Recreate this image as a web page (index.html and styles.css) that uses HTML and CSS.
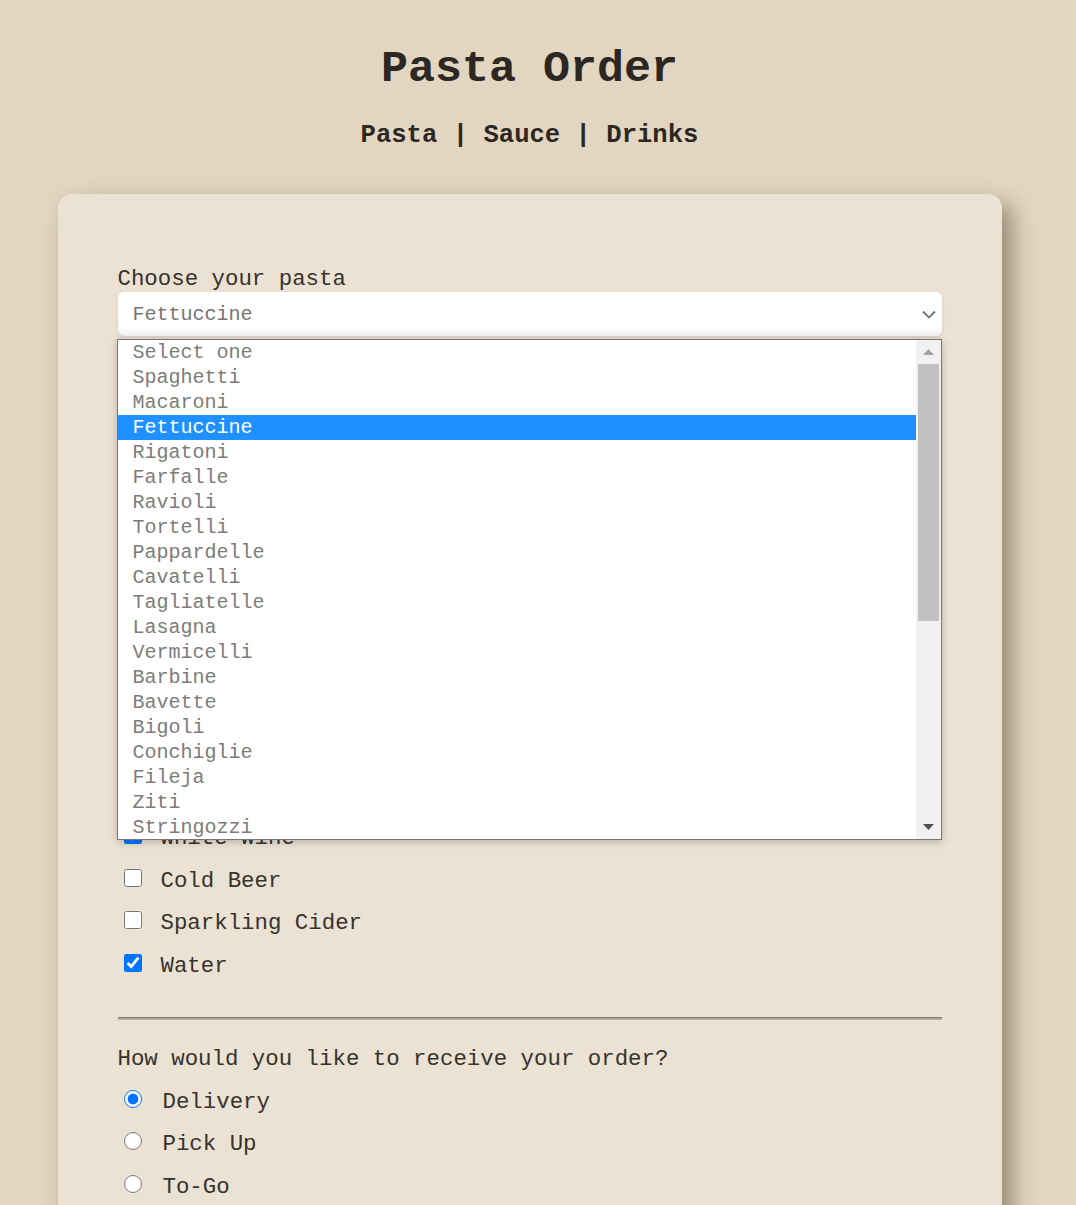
FILE: index.html
```html
<!DOCTYPE html>
<html lang="en">
<head>
<meta charset="utf-8">
<title>Pasta Order</title>
<link rel="stylesheet" href="styles.css">
</head>
<body>
<div class="page">
  <header class="header">
    <h1 class="title">Pasta Order</h1>
    <nav class="nav"><a href="#pasta">Pasta</a> | <a href="#sauce">Sauce</a> | <a href="#drinks">Drinks</a></nav>
  </header>

  <main class="card">
    <form class="order-form">
      <section class="field" id="pasta">
        <label class="field-label">Choose your pasta</label>
        <div class="select-wrap">
          <div class="select" role="combobox" aria-expanded="true">
            <span class="select-value">Fettuccine</span>
            <svg class="chevron" width="14" height="9" viewBox="0 0 14 9"><polyline points="1,1.5 7,7.5 13,1.5" fill="none" stroke="#737373" stroke-width="1.8"/></svg>
          </div>
          <div class="listbox" role="listbox">
            <ul class="options">
              <li class="option">Select one</li>
              <li class="option">Spaghetti</li>
              <li class="option">Macaroni</li>
              <li class="option is-selected">Fettuccine</li>
              <li class="option">Rigatoni</li>
              <li class="option">Farfalle</li>
              <li class="option">Ravioli</li>
              <li class="option">Tortelli</li>
              <li class="option">Pappardelle</li>
              <li class="option">Cavatelli</li>
              <li class="option">Tagliatelle</li>
              <li class="option">Lasagna</li>
              <li class="option">Vermicelli</li>
              <li class="option">Barbine</li>
              <li class="option">Bavette</li>
              <li class="option">Bigoli</li>
              <li class="option">Conchiglie</li>
              <li class="option">Fileja</li>
              <li class="option">Ziti</li>
              <li class="option">Stringozzi</li>
              <li class="option">Penne</li>
            </ul>
            <div class="scrollbar">
              <div class="scroll-btn"><svg width="11" height="6" viewBox="0 0 11 6"><polygon points="0,6 5.5,0 11,6" fill="#a3a3a3"/></svg></div>
              <div class="scroll-track"><div class="scroll-thumb"></div></div>
              <div class="scroll-btn"><svg width="11" height="6" viewBox="0 0 11 6"><polygon points="0,0 11,0 5.5,6" fill="#505050"/></svg></div>
            </div>
          </div>
        </div>
      </section>

      <hr class="divider divider-first">

      <section class="field" id="sauce">
        <p class="field-label">Choose your sauce</p>
        <div class="choices">
          <label class="choice"><input class="radio" type="radio" name="sauce" checked>Marinara</label>
          <label class="choice"><input class="radio" type="radio" name="sauce">Alfredo</label>
          <label class="choice"><input class="radio" type="radio" name="sauce">Pesto</label>
          <label class="choice"><input class="radio" type="radio" name="sauce">Carbonara</label>
          <label class="choice"><input class="radio" type="radio" name="sauce">Bolognese</label>
          <label class="choice"><input class="radio" type="radio" name="sauce">Arrabbiata</label>
        </div>
      </section>

      <hr class="divider">

      <section class="field" id="drinks">
        <p class="field-label">Choose your drinks</p>
        <div class="choices">
          <label class="choice"><input class="check" type="checkbox">Red Wine</label>
          <label class="choice"><input class="check" type="checkbox" checked>White Wine</label>
          <label class="choice"><input class="check" type="checkbox">Cold Beer</label>
          <label class="choice"><input class="check" type="checkbox">Sparkling Cider</label>
          <label class="choice"><input class="check" type="checkbox" checked>Water</label>
        </div>
      </section>

      <hr class="divider">

      <section class="field">
        <p class="field-label">How would you like to receive your order?</p>
        <div class="choices">
          <label class="choice"><input class="radio" type="radio" name="receive" checked>Delivery</label>
          <label class="choice"><input class="radio" type="radio" name="receive">Pick Up</label>
          <label class="choice"><input class="radio" type="radio" name="receive">To-Go</label>
        </div>
      </section>
    </form>
  </main>
</div>
</body>
</html>
```

FILE: styles.css
```css
html {
  overflow: hidden;
  background: #e2d6c0;
}

body {
  margin: 0;
  font-family: "Courier New", "Nimbus Mono PS", "Nimbus Mono L", FreeMono, "Liberation Mono", monospace;
  color: #2c2722;
}

.page {
  width: 1059px;
}

.header {
  padding-top: 44px;
  text-align: center;
}

.title {
  margin: 0;
  font-size: 45px;
  line-height: 51px;
  font-weight: 700;
}

.nav {
  margin-top: 26px;
  font-size: 25.6px;
  line-height: 29px;
  font-weight: 700;
}

.nav a {
  color: inherit;
  text-decoration: none;
}

.card {
  width: 944px;
  box-sizing: border-box;
  margin: 44px auto 0;
  padding: 73px 60px 80px;
  background: #ebe2d4;
  border-radius: 14px;
  box-shadow: 10px 10px 22px rgba(60, 45, 25, 0.45);
}

.order-form {
  margin: 0;
}

.field-label {
  display: block;
  margin: 0;
  font-size: 22.4px;
  line-height: 25px;
  color: #36322d;
}

.select-wrap {
  position: relative;
}

.select {
  height: 44px;
  box-sizing: border-box;
  padding: 0 6px 0 15px;
  display: flex;
  align-items: center;
  justify-content: space-between;
  background: #fff;
  border-radius: 6px;
  font-size: 20px;
  color: #767676;
  box-shadow: inset 0 -10px 10px -8px rgba(0, 0, 0, 0.09), 0 2px 4px rgba(0, 0, 0, 0.08);
}

.chevron {
  display: block;
}

.listbox {
  position: absolute;
  top: calc(100% + 3px);
  left: -1px;
  width: 825px;
  height: 501px;
  box-sizing: border-box;
  border: 1px solid #767676;
  background: #fff;
  display: flex;
  overflow: hidden;
  z-index: 10;
  box-shadow: 0 2px 8px rgba(0, 0, 0, 0.22);
}

.options {
  flex: 1;
  list-style: none;
  margin: 0;
  padding: 0;
  font-size: 20px;
  line-height: 25px;
  color: #7c7c7c;
}

.option {
  height: 25px;
  padding-left: 15px;
  white-space: nowrap;
}

.option.is-selected {
  background: #1e90ff;
  color: #fff;
}

.scrollbar {
  width: 25px;
  flex: none;
  display: flex;
  flex-direction: column;
  background: #f1f1f1;
}

.scroll-btn {
  height: 24px;
  flex: none;
  display: flex;
  align-items: center;
  justify-content: center;
}

.scroll-btn svg {
  display: block;
}

.scroll-track {
  flex: 1;
  padding: 0 2px;
}

.scroll-thumb {
  height: 257px;
  background: #c1c1c1;
}

.divider {
  height: 1px;
  margin: 29.5px 0 26.5px;
  border: 0;
  border-top: 1px solid #85807a;
  border-bottom: 1px solid #bdb5a8;
  background: #a29b91;
}

.divider-first {
  margin-top: 26.5px;
}

.choices {
  margin-top: 9.5px;
}

.choice {
  height: 42.5px;
  display: flex;
  align-items: center;
  font-size: 22.4px;
  line-height: 25px;
  color: #36322d;
  white-space: nowrap;
}

.check {
  width: 18px;
  height: 18px;
  margin: 0 19px 7px 6px;
  flex: none;
}

.radio {
  width: 18px;
  height: 18px;
  margin: 0 21px 7px 6px;
  flex: none;
}
```
